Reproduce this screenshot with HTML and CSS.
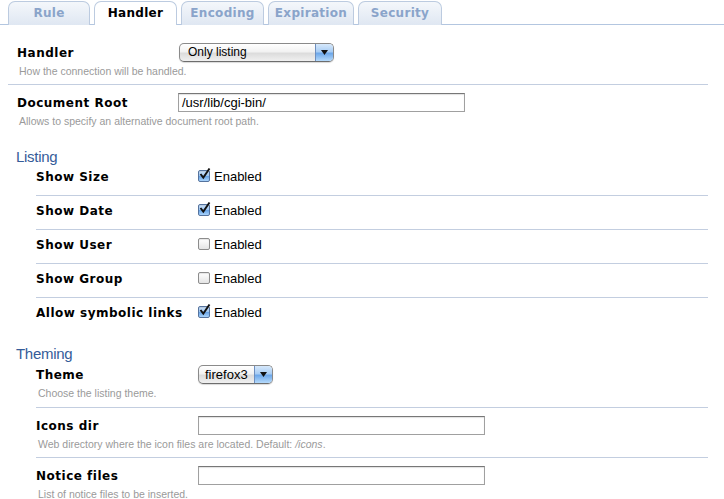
FILE: index.html
```html
<!DOCTYPE html>
<html>
<head>
<meta charset="utf-8">
<link rel="stylesheet" href="styles.css">
</head>
<body>
<div class="tabbar">
  <div class="tab t-rule">Rule</div>
  <div class="tab t-handler active">Handler</div>
  <div class="tab t-enc">Encoding</div>
  <div class="tab t-exp">Expiration</div>
  <div class="tab t-sec">Security</div>
</div>
<div class="page">
  <div class="field top first sep">
    <div class="row">
      <div class="label">Handler</div>
      <div class="select sel-handler"><span class="sel-text">Only listing</span><span class="sel-btn"><svg width="7" height="5" viewBox="0 0 7 5"><path d="M0 0h7L3.5 5z" fill="#111"/></svg></span></div>
    </div>
    <div class="help">How the connection will be handled.</div>
  </div>
  <div class="field top">
    <div class="row">
      <div class="label">Document Root</div>
      <div class="input in-doc">/usr/lib/cgi-bin/</div>
    </div>
    <div class="help">Allows to specify an alternative document root path.</div>
  </div>

  <div class="section-title s-listing">Listing</div>
  <div class="sub">
    <div class="crow sep"><div class="label">Show Size</div><span class="cb on"><svg width="13" height="13" viewBox="0 0 13 13"><path d="M2.5 6l2.8 3.6L11.5 0.5" stroke="#111" stroke-width="1.9" fill="none"/></svg></span><span class="cbl">Enabled</span></div>
    <div class="crow sep"><div class="label">Show Date</div><span class="cb on"><svg width="13" height="13" viewBox="0 0 13 13"><path d="M2.5 6l2.8 3.6L11.5 0.5" stroke="#111" stroke-width="1.9" fill="none"/></svg></span><span class="cbl">Enabled</span></div>
    <div class="crow sep"><div class="label">Show User</div><span class="cb"></span><span class="cbl">Enabled</span></div>
    <div class="crow sep"><div class="label">Show Group</div><span class="cb"></span><span class="cbl">Enabled</span></div>
    <div class="crow"><div class="label">Allow symbolic links</div><span class="cb on"><svg width="13" height="13" viewBox="0 0 13 13"><path d="M2.5 6l2.8 3.6L11.5 0.5" stroke="#111" stroke-width="1.9" fill="none"/></svg></span><span class="cbl">Enabled</span></div>
  </div>

  <div class="section-title s-theming">Theming</div>
  <div class="sub">
    <div class="field theme sep">
      <div class="row">
        <div class="label">Theme</div>
        <div class="select sel-theme"><span class="sel-text big">firefox3</span><span class="sel-btn"><svg width="7" height="5" viewBox="0 0 7 5"><path d="M0 0h7L3.5 5z" fill="#111"/></svg></span></div>
      </div>
      <div class="help">Choose the listing theme.</div>
    </div>
    <div class="field sep">
      <div class="row">
        <div class="label">Icons dir</div>
        <div class="input in-sub"></div>
      </div>
      <div class="help">Web directory where the icon files are located. Default: <i>/icons</i>.</div>
    </div>
    <div class="field">
      <div class="row">
        <div class="label">Notice files</div>
        <div class="input in-sub"></div>
      </div>
      <div class="help">List of notice files to be inserted.</div>
    </div>
  </div>
</div>
</body>
</html>
```
FILE: styles.css
```css
html, body {
  margin: 0;
  padding: 0;
  background: #fff;
}
body {
  width: 724px;
  height: 499px;
  overflow: hidden;
  font-family: "Liberation Sans", Arial, sans-serif;
  color: #000;
}
.tabbar {
  display: flex;
  gap: 4px;
  padding: 1px 0 0 8px;
  height: 23px;
  border-bottom: 1px solid #b3c6e0;
}
.tab {
  box-sizing: border-box;
  height: 24px;
  border: 1px solid #bccbe0;
  border-bottom: none;
  border-radius: 7px 7px 0 0;
  background: linear-gradient(#f4f7fb, #dfe7f2);
  color: #8aa4ca;
  font-family: "DejaVu Sans", Verdana, sans-serif;
  font-weight: bold;
  font-size: 12px;
  letter-spacing: 0.3px;
  line-height: 23px;
  text-align: center;
}
.tab.active {
  background: #fff;
  color: #000;
  height: 24px;
  position: relative;
  z-index: 1;
}
.t-rule { width: 82px; }
.t-handler { width: 83px; }
.t-enc { width: 83px; }
.t-exp { width: 86px; }
.t-sec { width: 84px; }

.page {
  margin-left: 8px;
  width: 700px;
}
.field {
  padding: 7px 0 6px;
}
.field.top.first {
  padding-top: 17px;
}
.field.top {
  padding-left: 9px;
}
.sep {
  border-bottom: 1px solid #c3cee0;
}
.row {
  display: flex;
  align-items: center;
  height: 20px;
}
.label {
  width: 162px;
  flex: none;
  font-family: "DejaVu Sans", Verdana, sans-serif;
  font-weight: bold;
  font-size: 12px;
  letter-spacing: 0.5px;
  padding-top: 1px;
}
.help {
  font-size: 10.5px;
  line-height: 14px;
  margin-top: 2px;
  padding-left: 2px;
  color: #9a9a9a;
}
.help i {
  font-style: italic;
}
.section-title {
  font-size: 15px;
  line-height: 16px;
  color: #355c99;
  padding-left: 8px;
  margin-bottom: -3px;
  letter-spacing: -0.3px;
}
.s-listing { margin-top: 15px; }
.s-theming { margin-top: 15px; }
.sub {
  margin-left: 28px;
}
.crow {
  display: flex;
  align-items: center;
  height: 20px;
  padding: 4px 0 9px;
}
.field.theme {
  padding-top: 5px;
  padding-bottom: 7px;
}

.input {
  box-sizing: border-box;
  height: 19px;
  border: 1px solid #a0a0a0;
  border-top-color: #777;
  box-shadow: inset 0 1px 1px rgba(0,0,0,0.12);
  background: #fff;
  font-size: 13px;
  line-height: 17px;
  padding-left: 3px;
  margin-left: -1px;
}
.in-doc { width: 287px; }
.in-sub { width: 287px; margin-left: 0; }

.select {
  box-sizing: border-box;
  height: 19px;
  display: flex;
  align-items: stretch;
  border: 1px solid #8a8a8a;
  border-bottom-color: #6d6d6d;
  border-radius: 5px;
  overflow: hidden;
  background: linear-gradient(#ffffff 0%, #f2f2f2 45%, #dcdcdc 55%, #f0f0f0 100%);
  box-shadow: 0 1px 1px rgba(0,0,0,0.15);
}
.sel-handler { width: 155px; }
.sel-theme { width: 75px; }
.sel-text {
  flex: 1;
  font-size: 12px;
  line-height: 17px;
  padding-left: 8px;
  color: #000;
}
.sel-text.big {
  font-size: 13px;
  padding-left: 6px;
}
.sel-btn {
  width: 17px;
  flex: none;
  border-left: 1px solid #6e8fbf;
  background: linear-gradient(#d6e8fb 0%, #a9cdf4 45%, #6ea8ea 55%, #b5dafb 100%);
  display: flex;
  align-items: center;
  justify-content: center;
}

.cb {
  box-sizing: border-box;
  width: 12px;
  height: 12px;
  flex: none;
  border: 1px solid #8c8c8c;
  border-radius: 2px;
  background: linear-gradient(#ffffff, #e4e4e4);
  box-shadow: inset 0 1px 1px rgba(0,0,0,0.1);
  position: relative;
}
.cb.on {
  border-color: #55739e;
  background: linear-gradient(#cfe3f9 0%, #9cc6f2 50%, #6aa5e6 55%, #a9d3fb 100%);
}
.cb svg {
  position: absolute;
  left: -1px;
  top: -3px;
}
.cbl {
  font-size: 13px;
  margin-left: 4px;
}
```
